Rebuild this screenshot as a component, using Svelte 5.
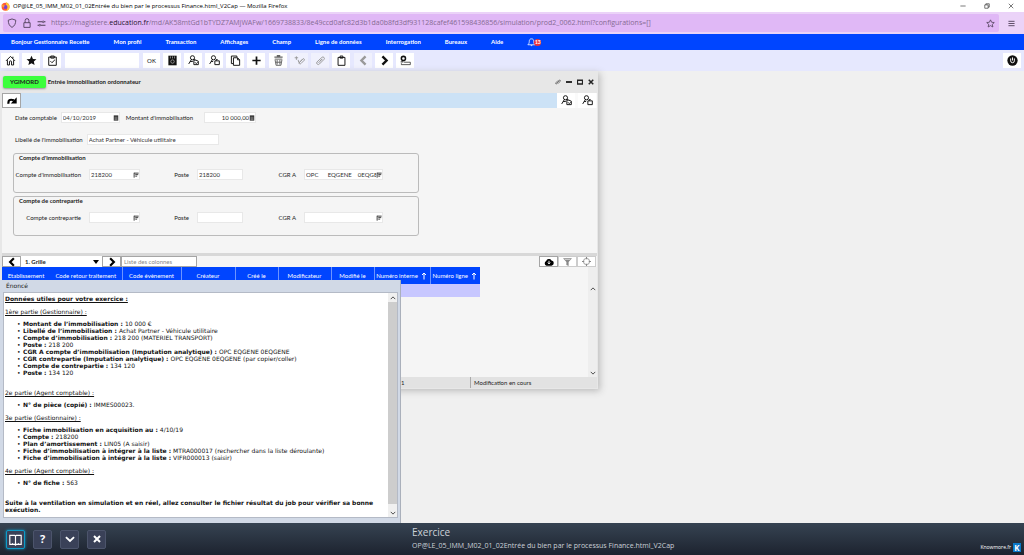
<script>
    // 16x16 icon bodies, drawn with currentColor
    const icons = {
        home: '<path d="M1.5 8.5 8 2l6.5 6.500M3.500 7.500V14.500H6.500V10a1.500 1.500 0 0 1 3 0V14.500H12.500V7.500M11.500 2.500V5"/>',
        star: '<path class="f" d="m8 1 2.100 4.700 5.100.500-3.800 3.400 1.100 5L8 12l-4.500 2.600 1.100-5L.8 6.200l5.100-.5z"/>',
        starline: '<path d="m8 1.500 2 4.300 4.700.500-3.500 3.200 1 4.700L8 11.800l-4.200 2.400 1-4.700-3.500-3.200L6 5.800z"/>',
        task: '<path d="M2.500 3h11v12h-11zM5.500 1.500h5v3h-5zM5 9l2.200 2.200L11.500 7"/>',
        save: '<path class="f" d="M2 1h12v14H2z"/><path stroke="#bbb" stroke-width="1" d="M5 2v3M8 2v3M11 2v3"/><circle cx="8" cy="9.500" r="2.500" stroke="#bbb" stroke-width="1"/>',
        findDoc: '<circle cx="6.500" cy="4" r="3"/><path d="M5 6.500 1 13M3 9.500h4M9 6.500h1.500M8.500 7.500h3L15 9v5H8.500zM10 10.500l2 2 2-2"/>',
        findBox: '<circle cx="6.500" cy="4" r="3"/><path d="M5 6.500 1 13M3 9.500h3M8.500 8.500H15V14H8.500zM10.500 8.500v-2h2"/>',
        copy: '<path d="M4.500 12.500H2v-11h8V3M5 4h6l3 3v8H5zM11 4v3h3"/>',
        plus: '<path stroke-width="2.500" d="M8 2v12M2 8h12"/>',
        trash: '<g stroke="#666"><path stroke-width="2" d="M2 3h12M5.500 1h5"/><path d="M2.500 6h11M3 7l1.500 8h7L13 7M6 7v7M10 7v7M4 10.500h8"/></g>',
        tag: '<path d="M1 4h5M3.500 2v5M7 12l6-6.500a1.500 1.500 0 0 1 2 2L10 12.500c-2 2-3-1-1.500-2.500l4-4M6 7l1 4"/>',
        clip: '<path d="m3 10 7-6.500a2 2 0 0 1 3 3L6.500 13A2 2 0 0 1 3 10M5 11.500l6-6M7 9l3-3"/>',
        paste: '<path d="M3 3.500h10V15H3zM6 1.500h4v3H6z"/>',
        prev: '<path stroke-width="3.500" d="m11 2-6 6 6 6"/>',
        next: '<path stroke-width="3.500" d="m5 2 6 6-6 6"/>',
        location: '<circle cx="5" cy="5" r="3" stroke-width="2.200"/><path d="M1 10h4"/><path stroke-width="1" d="M6 10.500h9V14H2v-2"/>',
        power: '<circle class="f" cx="8" cy="8" r="7.500"/><path stroke="#fff" d="M5.300 5v3.500a2.700 2.700 0 0 0 5.400 0V5M8 3.500V8"/>',
        bell: '<path d="M8 1.500c-3 0-4 2-4 5 0 3-1 4-2.500 5.500h13C13 10.500 12 9.500 12 6.500c0-3-1-5-4-5zM6.500 12.500a1.600 1.600 0 0 0 3 0"/>',
        shield: '<path d="M8 1.500 14 3.500C14 9 12 13 8 15 4 13 2 9 2 3.500z"/>',
        lock: '<path d="M3 7.500h10V15H3zM5 7.500V4a3 3 0 0 1 6 0v3.500"/>',
        tune: '<path stroke-width="1.800" d="M1 5h8M12.500 5H15M1 11h2.500M7 11h8"/><circle cx="11" cy="5" r="1.500"/><circle cx="5" cy="11" r="1.500"/>',
        burger: '<path stroke-width="2" d="M1 3h14M1 8h14M1 13h14"/>',
        minus: '<path d="M1 8h14"/>',
        restore: '<path d="M2 5h9v9H2zM5 5V2h9v9h-3"/>',
        close: '<path d="m2 2 12 12M14 2 2 14"/>',
        link: '<path d="m7 10-3 3.500a2 2 0 0 1-2-3L8 4M9 12l5-6.500a2 2 0 0 0-2-3L9 6M5 11l6-6"/>',
        bar: '<path stroke-width="5" d="M0 8h16"/>',
        square: '<path stroke-width="4" d="M1 3h14v10H1z"/>',
        cross: '<path stroke-width="4" d="m2 2 12 12M14 2 2 14"/>',
        redo: '<path stroke-width="3.500" d="M2.500 12.500C1.500 7 4.500 4.500 11 7"/><path class="f" d="M15.500 2v10H6z"/>',
        cloud: '<path class="f" d="M4 14a4 4 0 0 1-.5-7.500A4.700 4.700 0 0 1 12 5.500 4.300 4.300 0 0 1 12 14z"/><path stroke="#fff" stroke-width="1.500" d="M8 6v5M6 9l2 2 2-2"/>',
        filter: '<path class="f" d="M0 2h16l-6 7v7l-4-2V9z"/><path stroke="#fff" stroke-width="1" d="M3 4.500h10"/>',
        target: '<circle cx="8" cy="8" r="5.500"/><path stroke-width="2" d="M8 0v4M8 12v4M0 8h4M12 8h4"/>',
        calendar: '<path class="f" d="M2 1h12v14H2z"/><path stroke="#ddd" stroke-width="1" d="M4 6h8M4 9h8M4 12h8"/>',
        list: '<path stroke-width="2.500" d="M3 2v13M3 3h12M6 7h8M6 11h5"/>',
        up: '<path stroke-width="2.500" d="m2 11 6-6 6 6"/>',
        down: '<path stroke-width="2.500" d="m2 5 6 6 6-6"/>',
        arrow: '<path stroke-width="2" d="M8 15V2M4 6l4-4 4 4"/>',
        book: '<path d="M1 3h6l1 1 1-1h6v11H9l-1 1-1-1H1zM8 4v11M4 13h1M11 13h1"/>',
        check: '<path stroke-width="3" d="m1.500 5 6.500 6 6.500-6"/>',
    };

    const menu = ["Bonjour Gestionnaire Recette", "Mon profil", "Transaction", "Affichages", "Champ", "Ligne de données", "Interrogation", "Bureaux", "Aide"];

    const groups = [
        [["save", "Enregistrer"], ["findDoc", "Rechercher"], ["findBox", "Consulter"], ["copy", "Copier"], ["plus", "Ajouter"]],
        [["trash", "Supprimer"], ["tag", "Annoter", true], ["clip", "Joindre", true], ["paste", "Coller"]],
        [["prev", "Précédent", true], ["next", "Suivant"], ["location", "Localiser"]],
    ];

    const columns = [
        { name: "Etablissement", width: 48 },
        { name: "Code retour traitement", width: 72 },
        { name: "Code évènement", width: 59, line: true },
        { name: "Créateur", width: 54, line: true },
        { name: "Créé le", width: 43, line: true },
        { name: "Modificateur", width: 53, line: true },
        { name: "Modifié le", width: 43, line: true },
        { name: "Numéro interne", width: 56, line: true, sort: true },
        { name: "Numéro ligne", width: 50, line: true, sort: true },
    ];

    const parties = [
        {
            titre: "1ère partie (Gestionnaire) :",
            lignes: [
                ["Montant de l’immobilisation :", "10 000 €"],
                ["Libellé de l’immobilisation :", "Achat Partner - Véhicule utilitaire"],
                ["Compte d’immobilisation :", "218 200 (MATERIEL TRANSPORT)"],
                ["Poste :", "218 200"],
                ["CGR A compte d’immobilisation (Imputation analytique) :", "OPC EQGENE 0EQGENE"],
                ["CGR contrepartie (Imputation analytique) :", "OPC EQGENE 0EQGENE (par copier/coller)"],
                ["Compte de contrepartie :", "134 120"],
                ["Poste :", "134 120"],
            ],
        },
        { titre: "2e partie (Agent comptable) :", loin: true, lignes: [["N° de pièce (copié) :", "IMMES00023."]] },
        {
            titre: "3e partie (Gestionnaire) :",
            lignes: [
                ["Fiche immobilisation en acquisition au :", "4/10/19"],
                ["Compte :", "218200"],
                ["Plan d’amortissement :", "LIN05 (A saisir)"],
                ["Fiche d’immobilisation à intégrer à la liste :", "MTRA000017 (rechercher dans la liste déroulante)"],
                ["Fiche d’immobilisation à intégrer à la liste :", "VIFR000013 (saisir)"],
            ],
        },
        { titre: "4e partie (Agent comptable) :", lignes: [["N° de fiche :", "563"]] },
    ];

    let comptes = $state([
        { id: "immo", legend: "Compte d'immobilisation", label: "Compte d'immobilisation", compte: "218200", poste: "218200", cgr: "OPC      EQGENE    0EQGENE" },
        { id: "contre", legend: "Compte de contrepartie", label: "Compte contrepartie", compte: "", poste: "", cgr: "" },
    ]);
</script>

{#snippet icon(name, size)}
    <svg class="icon" viewBox="0 0 16 16" width={size} height={size} aria-hidden="true">{@html icons[name]}</svg>
{/snippet}

{#snippet tool(name, label, disabled)}
    <button class="tool" aria-label={label} {disabled}>{@render icon(name, 11)}</button>
{/snippet}

{#snippet scroller()}
    <div class="scroller">
        <button aria-label="Défiler vers le haut">{@render icon("up", 6)}</button>
        <span class="thumb"></span>
        <button aria-label="Défiler vers le bas">{@render icon("down", 6)}</button>
    </div>
{/snippet}

<div class="page">
    <div class="titlebar">
        <svg class="firefox" viewBox="0 0 16 16" width="9" height="9" aria-hidden="true">
            <circle cx="8" cy="8.500" r="7" fill="#ff5a36" />
            <path d="M9 0c4 2 7 5 6.500 9.500-.5 3-3 6-7 6.200C12 13 12 9 9 7z" fill="#ffc53a" />
            <circle cx="8" cy="9" r="3.500" fill="#7a3fd0" />
            <path d="M1 5c2-1 4 0 5 1l2 1c-2 0-3 1-3 3-2-1-4-2-4-5z" fill="#ff9a2e" />
        </svg>
        <span class="wintitle">OP@LE_05_IMM_M02_01_02Entrée du bien par le processus Finance.html_V2Cap — Mozilla Firefox</span>
        <button aria-label="Réduire">{@render icon("minus", 6)}</button>
        <button aria-label="Restaurer">{@render icon("restore", 6)}</button>
        <button aria-label="Fermer">{@render icon("close", 6)}</button>
    </div>

    <div class="navbar">
        <div class="address">
            {@render icon("shield", 10)}
            {@render icon("lock", 10)}
            {@render icon("tune", 9)}
            <span class="url">https://magistere.<b>education.fr</b>/md/AK58mtGd1bTYDZ7AMjWAFw/1669738833/8e49ccd0afc82d3b1da0b8fd3df931128cafef461598436856/simulation/prod2_0062.html?configurations=[]</span>
            <button aria-label="Marquer cette page">{@render icon("starline", 9)}</button>
        </div>
        <button aria-label="Menu">{@render icon("burger", 7)}</button>
    </div>

    <nav class="menu">
        {#each menu as item}
            <a href="#menu">{item}</a>
        {/each}
        <button class="bell" aria-label="Notifications">{@render icon("bell", 9)}<span class="count">13</span></button>
    </nav>

    <div class="toolbar">
        <div class="group">
            {@render tool("home", "Accueil")}
            {@render tool("star", "Favoris")}
            {@render tool("task", "Tâches")}
        </div>
        <input class="command" aria-label="Code transaction" />
        <div class="group">
            <button class="tool ok">OK</button>
            {#each groups[0] as [name, label, off]}{@render tool(name, label, off)}{/each}
        </div>
        {#each groups.slice(1) as group}
            <div class="group">
                {#each group as [name, label, off]}{@render tool(name, label, off)}{/each}
            </div>
        {/each}
        <div class="quit">{@render tool("power", "Quitter")}</div>
    </div>

    <main class="desktop">
        <section class="window">
            <header class="head">
                <span class="badge">YGIMORD</span>
                <h1>Entrée immobilisation ordonnateur</h1>
                <button aria-label="Lien">{@render icon("link", 6)}</button>
                <button aria-label="Réduire la fenêtre">{@render icon("bar", 6)}</button>
                <button aria-label="Agrandir la fenêtre">{@render icon("square", 6)}</button>
                <button aria-label="Fermer la fenêtre">{@render icon("cross", 6)}</button>
            </header>

            <div class="actions">
                <button class="boxed" aria-label="Valider">{@render icon("redo", 10)}</button>
                <div class="message"></div>
                <div class="group">
                    {@render tool("findDoc", "Rechercher")}
                    {@render tool("findBox", "Consulter")}
                </div>
            </div>

            <form class="form">
                <div class="row">
                    <label for="date">Date comptable</label>
                    <span class="field date"><input id="date" value="04/10/2019" />{@render icon("calendar", 6)}</span>
                    <label for="montant">Montant d'immobilisation</label>
                    <span class="field montant"><input id="montant" value="10 000,00" />{@render icon("calendar", 6)}</span>
                </div>
                <div class="row">
                    <label for="libelle">Libellé de l'immobilisation</label>
                    <span class="field libelle"><input id="libelle" value="Achat Partner - Véhicule utilitaire" /></span>
                </div>
                {#each comptes as c}
                    <div class="compte" role="group" aria-labelledby="{c.id}-titre">
                        <h2 id="{c.id}-titre">{c.legend}</h2>
                        <div class="saisie">
                            <label for="{c.id}-compte">{c.label}</label>
                            <span class="field"><input id="{c.id}-compte" bind:value={c.compte} />{@render icon("list", 6)}</span>
                            <label for="{c.id}-poste">Poste</label>
                            <span class="field"><input id="{c.id}-poste" bind:value={c.poste} /></span>
                            <label for="{c.id}-cgr">CGR A</label>
                            <span class="field"><input id="{c.id}-cgr" bind:value={c.cgr} />{@render icon("list", 6)}</span>
                        </div>
                    </div>
                {/each}
            </form>

            <div class="gridbar">
                <button class="boxed" aria-label="Grille précédente">{@render icon("prev", 10)}</button>
                <span class="picker">
                    <select aria-label="Grille"><option>1. Grille</option></select>
                    <svg viewBox="0 0 6 4" width="6" height="4" aria-hidden="true"><path d="M0 0h6L3 4z" /></svg>
                </span>
                <button class="boxed" aria-label="Grille suivante">{@render icon("next", 10)}</button>
                <input class="cols" aria-label="Liste des colonnes" placeholder="Liste des colonnes" />
                <div class="right">
                    <button class="boxed" aria-label="Télécharger">{@render icon("cloud", 10)}</button>
                    <button class="boxed off" aria-label="Filtrer">{@render icon("filter", 9)}</button>
                    <button class="boxed off" aria-label="Cibler">{@render icon("target", 9)}</button>
                </div>
            </div>

            <div class="grid">
                <div class="tablebox">
                    <table>
                        <thead>
                            <tr>
                                {#each columns as col}
                                    <th class:line={col.line} style="width: {col.width}px">
                                        {col.name}{#if col.sort}<span class="sort">{@render icon("arrow", 8)}</span>{/if}
                                    </th>
                                {/each}
                            </tr>
                        </thead>
                        <tbody>
                            <tr>{#each columns as col}<td></td>{/each}</tr>
                        </tbody>
                    </table>
                </div>
                {@render scroller()}
            </div>

            <footer class="status">
                <span class="page-no">1</span>
                <span class="mode">Modification en cours</span>
            </footer>
        </section>
    </main>

    <aside class="enonce">
        <h2>Énoncé</h2>
        <div class="sheet">
            <div class="text">
                <p class="intro">Données utiles pour votre exercice :</p>
                {#each parties as partie}
                    <p class="part" class:loin={partie.loin}>{partie.titre}</p>
                    <ul>
                        {#each partie.lignes as [cle, valeur]}
                            <li><b>{cle}</b> {valeur}</li>
                        {/each}
                    </ul>
                {/each}
                <p class="fin">Suite à la ventilation en simulation et en réel, allez consulter le fichier résultat du job pour vérifier sa bonne exécution.</p>
            </div>
            {@render scroller()}
        </div>
    </aside>

    <footer class="player">
        <div class="keys">
            <button class="active" aria-label="Énoncé">{@render icon("book", 13)}</button>
            <button aria-label="Aide">?</button>
            <button aria-label="Valider">{@render icon("check", 10)}</button>
            <button aria-label="Quitter">{@render icon("cross", 8)}</button>
        </div>
        <div class="exo">
            <strong>Exercice</strong>
            <span>OP@LE_05_IMM_M02_01_02Entrée du bien par le processus Finance.html_V2Cap</span>
        </div>
        <a class="brand" href="#knowmore">Knowmore.fr <span>K</span></a>
    </footer>
</div>

<style>
    :global(body) {
        margin: 0;
        background: #f0f0f0;
    }
    .page, .page :global(*) {
        box-sizing: border-box;
    }
    .page {
        position: relative;
        display: flex;
        flex-direction: column;
        min-height: 100vh;
        font: 6px/10px Lato, sans-serif;
        color: #222;
    }
    button, input, select {
        margin: 0;
        padding: 0;
        border: 0;
        background: none;
        font: inherit;
        color: inherit;
        border-radius: 0;
        min-width: 0;
    }
    button {
        display: flex;
        align-items: center;
        justify-content: center;
    }
    h1, h2, p, ul {
        margin: 0;
        font-size: inherit;
    }
    a {
        color: inherit;
        text-decoration: none;
    }
    .icon {
        display: block;
        flex: none;
        fill: none;
        stroke: currentColor;
        stroke-width: 1.4;
    }
    .icon :global(.f) {
        fill: currentColor;
        stroke: none;
    }

    .titlebar {
        display: flex;
        align-items: center;
        gap: 18px;
        height: 12px;
        padding: 0 10px 0 1px;
        background: #fff;
        color: #000;
        font: 6px/12px "Open Sans", sans-serif;
    }
    .wintitle {
        flex: 1;
        margin-left: -15px;
        white-space: nowrap;
    }
    .navbar {
        display: flex;
        align-items: center;
        gap: 9px;
        height: 22px;
        padding: 0 9px 0 3px;
        background: #ebd3f8;
        color: #4d3d57;
        font: 7px/18px "Open Sans", sans-serif;
    }
    .address {
        display: flex;
        flex: 1;
        align-items: center;
        gap: 5px;
        min-width: 0;
        height: 18px;
        padding: 0 4px;
        border-radius: 2px;
        background: #e0b8f6;
    }
    .url {
        flex: 1;
        overflow: hidden;
        color: #866b93;
        white-space: nowrap;
    }
    .url b {
        color: #25132f;
        font-weight: 400;
    }
    .menu {
        display: flex;
        align-items: center;
        gap: 24px;
        height: 16px;
        padding: 0 11px;
        background: #0045ff;
        color: #fff;
        font-weight: 700;
    }
    .bell {
        position: relative;
    }
    .count {
        position: absolute;
        top: 1px;
        left: 7px;
        width: 7px;
        height: 7px;
        border-radius: 4px;
        background: #ee3338;
        font-size: 5px;
        line-height: 7px;
    }
    .toolbar {
        display: flex;
        align-items: center;
        gap: 4px;
        height: 21px;
        padding: 0 3px 0 1px;
        background: #e6e8fe;
    }
    .group {
        display: flex;
        gap: 3px;
    }
    .tool {
        width: 18px;
        height: 15px;
        background: #fff;
        color: #111;
    }
    .tool:disabled {
        background: #f0f1fd;
        color: #999;
    }
    .ok {
        width: 17px;
    }
    .command {
        width: 74px;
        height: 15px;
        background: #fff;
    }
    .quit {
        margin-left: auto;
    }

    .desktop {
        position: relative;
        flex: 1;
        background: #f0f0f0;
    }
    .window {
        position: absolute;
        top: 0;
        left: 0;
        display: flex;
        flex-direction: column;
        width: 598px;
        padding: 0 1px 1px 2px;
        background: #e7e7e7;
        box-shadow: 2px 2px 7px #bbb;
    }
    .head {
        display: flex;
        align-items: center;
        gap: 5px;
        height: 22px;
        padding: 0 3px 0 1px;
    }
    .head h1 {
        flex: 1;
        margin-left: -3px;
        font-weight: 700;
    }
    .badge {
        padding: 1px 7px;
        border-radius: 2px;
        background: #3cff3c;
        box-shadow: 0 1px 2px #999;
        font-weight: 700;
    }
    .actions {
        display: flex;
        height: 15px;
        padding-right: 1px;
        background: #fafafa;
    }
    .message {
        flex: 1;
        background: #cce2f6;
    }
    .boxed {
        width: 19px;
        border: 1px solid #a5a5a5;
        background: #fff;
        color: #000;
    }
    .form {
        display: flex;
        flex-direction: column;
        height: 145px;
        padding: 4px 13px 0;
        background: #f5f5f5;
    }
    .row {
        display: flex;
        align-items: center;
        gap: 4px;
        height: 11px;
        margin-bottom: 11px;
    }
    .row + .row {
        margin-bottom: 8px;
    }
    .field {
        display: flex;
        align-items: center;
        height: 11px;
        border: 1px solid #e8e8e8;
        background: #fff;
        color: #333;
    }
    .field input {
        flex: 1;
        width: 0;
        height: 9px;
        padding-left: 1px;
    }
    .date {
        width: 59px;
        margin-right: 2px;
    }
    .montant {
        width: 52px;
        margin-left: 7px;
    }
    .montant input {
        text-align: right;
    }
    .libelle {
        width: 132px;
    }
    .compte {
        width: 406px;
        height: 40px;
        margin: 0 0 3px -2px;
        border: 1px solid #bbb;
        border-radius: 3px;
    }
    .compte h2 {
        padding-left: 5px;
        line-height: 7px;
    }
    .saisie {
        display: grid;
        grid-template-columns: 67px 51px 41px 46px 45px 79px;
        column-gap: 8px;
        align-items: center;
        margin-top: 8px;
    }
    .saisie label {
        text-align: right;
        white-space: nowrap;
    }

    .gridbar {
        display: flex;
        height: 14px;
        padding-right: 1px;
        border-top: 3px solid #d8d8d8;
        background: #f5f5f5;
    }
    .picker {
        position: relative;
        display: flex;
        width: 81px;
        background: #fff;
    }
    .picker select {
        width: 100%;
        padding-left: 4px;
        appearance: none;
        font-weight: 700;
    }
    .picker svg {
        position: absolute;
        top: 4px;
        right: 3px;
        pointer-events: none;
    }
    .cols {
        width: 76px;
        padding-left: 2px;
        border: 1px solid #a5a5a5;
        background: #fff;
    }
    .cols::placeholder {
        color: #888;
        opacity: 1;
    }
    .right {
        display: flex;
        margin-left: auto;
    }
    .off {
        border-color: #ccc;
        color: #888;
    }
    .grid {
        display: flex;
        height: 110px;
        background: #f5f5f5;
    }
    .tablebox {
        flex: 1;
    }
    table {
        table-layout: fixed;
        width: 478px;
        border-collapse: collapse;
    }
    th {
        height: 17px;
        padding: 0;
        background: #0045ff;
        color: #fff;
        font-weight: 400;
        white-space: nowrap;
    }
    .line {
        border-left: 1px solid #6d94ff;
    }
    .sort {
        display: inline-block;
        margin-left: 2px;
        vertical-align: middle;
    }
    td {
        height: 13px;
        padding: 0;
        background: #c7c7ff;
    }
    .scroller {
        display: flex;
        flex-direction: column;
        flex: none;
        width: 9px;
        background: #f0f0f0;
        color: #444;
    }
    .scroller button {
        height: 9px;
    }
    .thumb {
        flex: 1;
    }
    .grid .scroller {
        padding-top: 17px;
        background: #eee;
    }
    .status {
        display: flex;
        height: 11px;
        background: #e2e2e2;
        line-height: 11px;
    }
    .page-no {
        width: 469px;
        padding-left: 399px;
        border-right: 1px solid #aaa;
    }
    .mode {
        padding-left: 3px;
    }

    /* panel lying over the desktop, just above the player bar */
    .enonce {
        position: absolute;
        bottom: 32px;
        left: 0;
        width: 401px;
        padding: 0 2px 5px 3px;
        background: #d1d9e6;
        border-right: 1px solid #aab0bb;
        font-family: "DejaVu Sans", sans-serif;
    }
    .enonce h2 {
        padding-left: 3px;
        font: 6px/12px "DejaVu Sans", sans-serif;
    }
    .sheet {
        display: flex;
        border: 1px solid #b4bac6;
        background: #fff;
    }
    .text {
        flex: 1;
        padding: 2px 1px 4px;
        font-size: 6px;
        line-height: 7px;
        color: #111;
    }
    .intro {
        font-weight: 700;
        text-decoration: underline;
    }
    .part {
        margin-top: 6px;
        text-decoration: underline;
    }
    .loin, .fin {
        margin-top: 13px;
    }
    .fin {
        font-weight: 700;
    }
    ul {
        margin-top: 5px;
        padding-left: 12px;
        list-style: none;
    }
    li {
        display: flex;
        gap: 2px;
    }
    li::before {
        content: "•";
        width: 4px;
    }
    .enonce .thumb {
        flex: none;
        height: 202px;
        margin-bottom: auto;
        background: #cdcdcd;
    }

    .player {
        display: flex;
        align-items: center;
        height: 32px;
        padding: 0 3px 0 6px;
        background: linear-gradient(#364352, #1d232f);
        color: #ccd1d8;
        font-family: "Open Sans", sans-serif;
    }
    .keys {
        display: flex;
        flex: 0 0 406px;
        gap: 8px;
    }
    .keys button {
        width: 19px;
        height: 19px;
        border: 1px solid #4c546b;
        border-radius: 2px;
        background: #3a4158;
        color: #fff;
        font-size: 11px;
        font-weight: 700;
    }
    .keys .active {
        border-color: #0d9bc8;
        box-shadow: 0 0 3px #0d9bc8;
    }
    .exo {
        display: flex;
        flex: 1;
        flex-direction: column;
        font-size: 7px;
        line-height: 14px;
    }
    .exo strong {
        font-size: 10px;
        font-weight: 400;
    }
    .brand {
        display: flex;
        align-items: center;
        align-self: flex-end;
        gap: 2px;
        margin-bottom: 3px;
        color: #fff;
        font-size: 5px;
    }
    .brand span {
        width: 8px;
        background: #0b78c8;
        font-size: 8px;
        font-weight: 700;
        line-height: 9px;
        text-align: center;
    }
</style>
